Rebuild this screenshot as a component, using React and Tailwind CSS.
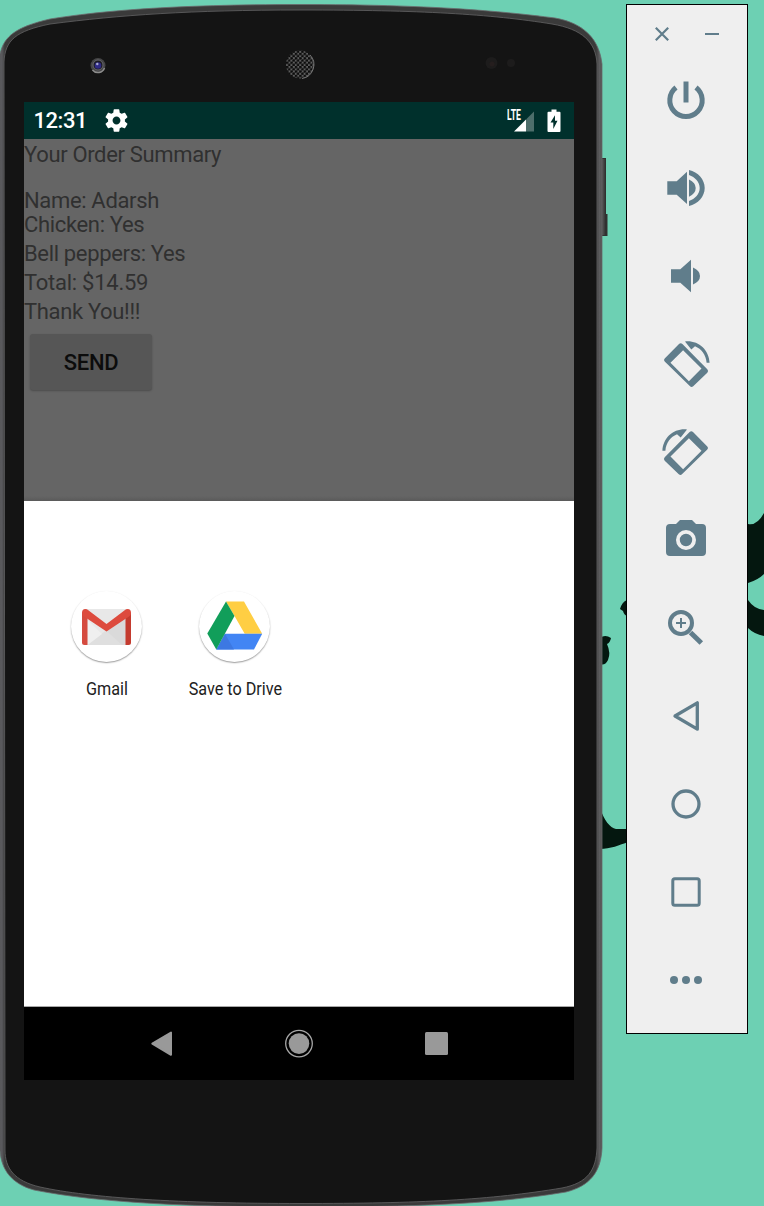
import React from "react";

const PHONE = "M0 54C4 36 16 27 50 19C100 11 170 4.500 301 4.500C430 4.500 500 11 555 18C583 23 597 38 601 58L602 64V1148C601 1172 590 1186 566 1192C500 1203 430 1207 301 1207C170 1207 90 1201 34 1190C12 1184 1 1170 0 1150Z";
const FACE = "M4 62C5 40 16 31 50 24C120 15 190 10 301 10C420 10 490 14 552 24C582 29 596 42 597 64V1148C596 1170 588 1183 562 1188C490 1200 420 1203.500 301 1203.500C180 1203.500 90 1198 40 1187C14 1181 5 1168 5 1150Z";

function Backdrop() {
  return (
    <svg className="absolute inset-0" width="764" height="1206" viewBox="0 0 764 1206">
      <g fill="#04170f">
        <path d="M748 524Q757 526 764 513V574Q758 580 748 583Z" />
        <path d="M748 600Q754 609 764 610V636Q754 634 748 628Z" />
        <path d="M620 609Q622 602 627 600V616Q624 615 623 611Z" />
        <path d="M600 638Q605 634 611 638Q610 643 607 644Q611 653 608 660Q605 666 600 664Z" />
        <path d="M600 808C604 820 610 828 616 829H628V842C620 845 610 849 600 849Z" />
      </g>
    </svg>
  );
}

function PhoneBody() {
  return (
    <svg className="absolute inset-0" width="764" height="1206" viewBox="0 0 764 1206">
      <defs>
        <linearGradient id="rim" x1="0" x2="1" y1="0" y2="0">
          <stop offset="0" stopColor="#4a4a4c" />
          <stop offset="0.003" stopColor="#5c5c60" />
          <stop offset="0.008" stopColor="#3a3a3a" />
          <stop offset="0.99" stopColor="#3a3a3a" />
          <stop offset="0.996" stopColor="#5d5d5f" />
          <stop offset="1" stopColor="#505050" />
        </linearGradient>
        <pattern id="mesh" width="4.4" height="4.4" patternUnits="userSpaceOnUse">
          <rect width="4.4" height="4.4" fill="#5c5c5c" />
          <circle cx="1.1" cy="1.1" r="1.4" fill="#0b0b0b" />
          <circle cx="3.3" cy="3.3" r="1.4" fill="#0b0b0b" />
        </pattern>
      </defs>
      <path d="M600 158H606V214H607.500V236H600Z" fill="#303030" />
      <path d="M602 159H604.500V235H602Z" fill="#484848" />
      <path d={PHONE} fill="url(#rim)" stroke="#6a6a6c" strokeWidth="0.8" />
      <path d={FACE} fill="#141414" stroke="#5c5c5e" strokeWidth="0.9" />
      <circle cx="98" cy="65.500" r="7.500" fill="#454546" />
      <path d="M92.500 70A7 7 0 0 0 104.500 68" fill="none" stroke="#8c8c8c" strokeWidth="1.500" />
      <circle cx="98" cy="65" r="5" fill="#1c1b22" stroke="#6b6b70" strokeWidth="0.900" />
      <circle cx="98" cy="65.500" r="3.300" fill="#2f2a86" />
      <circle cx="97.300" cy="64" r="1.200" fill="#a9a9cf" />
      <circle cx="300" cy="64.500" r="14" fill="url(#mesh)" />
      <path d="M310 55A14 14 0 0 1 302 78.500" fill="none" stroke="#777" strokeWidth="1" />
      <circle cx="491.500" cy="63" r="6" fill="#1d1c1c" />
      <circle cx="492" cy="64" r="2.500" fill="#251e1e" />
      <circle cx="511" cy="63" r="4" fill="#1d1c1c" />
    </svg>
  );
}

function StatusBar() {
  return (
    <div className="flex h-[37px] shrink-0 items-center bg-[#00302c] pl-[9.500px] pr-[13px]">
      <span className="w-[55px] text-[22px] leading-[37px] font-medium tracking-[-0.45px] whitespace-nowrap text-white">12:31</span>
      <svg className="ml-[14.500px]" width="27" height="27" viewBox="0 0 24 24" fill="#fff">
        <path d="M19.430 12.980c.04-.32.07-.64.07-.98s-.03-.66-.07-.98l2.110-1.650c.19-.15.24-.42.12-.64l-2-3.460c-.12-.22-.39-.3-.61-.22l-2.490 1c-.52-.4-1.080-.73-1.690-.98l-.38-2.650C14.460 2.180 14.250 2 14 2h-4c-.25 0-.46.18-.49.42l-.38 2.650c-.61.25-1.170.59-1.690.98l-2.490-1c-.23-.09-.49 0-.61.22l-2 3.460c-.13.22-.07.49.12.64l2.110 1.650c-.04.32-.07.65-.07.98s.03.66.07.98l-2.110 1.650c-.19.15-.24.42-.12.64l2 3.460c.12.22.39.3.61.22l2.490-1c.52.4 1.080.73 1.690.98l.38 2.650c.03.24.24.42.49.42h4c.25 0 .46-.18.49-.42l.38-2.650c.61-.25 1.170-.59 1.690-.98l2.490 1c.23.09.49 0 .61-.22l2-3.460c.12-.22.07-.49-.12-.64l-2.110-1.650zM12 15.500c-1.930 0-3.500-1.570-3.500-3.500s1.570-3.500 3.500-3.500 3.500 1.570 3.500 3.500-1.570 3.500-3.500 3.500z" />
      </svg>
      <span className="ml-auto flex h-[24px] w-[28px] items-start">
        <span className="w-[15px] shrink-0">
          <span className="block w-[26px] origin-left scale-x-[0.62] text-[14px] leading-[12px] font-bold text-white">LTE</span>
        </span>
        <svg className="-ml-[8px] shrink-0" width="21" height="24" viewBox="0 0 21 24">
          <path d="M0 22.500L12 10.500V22.500Z" fill="#fff" />
          <path d="M12 10.500L20 2.500V22.500H12Z" fill="#4d6e6b" />
        </svg>
      </span>
      <svg className="ml-[12px]" width="14" height="24" viewBox="0 0 14 24">
        <path d="M4.500 0.500H9.500V2.800H12.500Q13.500 2.800 13.500 3.800V22Q13.500 23 12.500 23H1.500Q0.500 23 0.500 22V3.800Q0.500 2.800 1.500 2.800H4.500Z" fill="#fff" />
        <path d="M8 6.300L3.500 13.500H6.300V20L10.500 11.800H8Z" fill="#00302c" />
      </svg>
    </div>
  );
}

function OrderSummary() {
  return (
    <div className="flex h-[362px] shrink-0 flex-col bg-[#656565] text-[22px] leading-[29px] tracking-[-0.34px] text-[#303030]">
      <p className="mt-[1px]">Your Order Summary</p>
      <p className="mt-[17px]">Name: Adarsh</p>
      <p className="-mt-[5px]">Chicken: Yes</p>
      <p>Bell peppers: Yes</p>
      <p className="tracking-[-0.26px]">Total: $14.59</p>
      <p>Thank You!!!</p>
      <button className="mt-[8px] ml-[6px] h-[56px] w-[122px] rounded-[3px] bg-[#565656] font-medium text-[#0c0c0c] shadow-[0_1px_2px_rgba(0,0,0,0.25)]">SEND</button>
      <div className="mt-auto h-[5px] bg-linear-to-b from-[#656565] to-[#5a5a5a]" />
    </div>
  );
}

function GmailIcon() {
  return (
    <svg width="72" height="72" viewBox="0 0 72 72" className="shrink-0">
      <path d="M15 18H58Q61 18 61 21V51Q61 54 58 54H15Q12 54 12 51V21Q12 18 15 18Z" fill="#e8e8e8" />
      <path d="M17.500 54L36.500 39L55.500 54Z" fill="#dfdfdf" />
      <path d="M17.500 54L32 43L17.500 29Z" fill="#efefef" />
      <path d="M36.500 40L56 27V54H52Z" fill="#dadada" />
      <path d="M17.500 27V54H14.500Q12 54 12 51.500V21Z" fill="#d54b3f" />
      <path d="M55.500 27V54H58.500Q61 54 61 51.500V21Z" fill="#c43b2f" />
      <path d="M12 22Q12 18 15.500 18Q17 18 18 19L36.500 33L55 19Q56 18 57.500 18Q61 18 61 22Q61 24 59 25.500L36.500 40.500L14 25.500Q12 24 12 22Z" fill="#dd4b3e" />
    </svg>
  );
}

function DriveIcon() {
  return (
    <svg width="72" height="72" viewBox="0 0 72 72" className="shrink-0">
      <path d="M27 10.500H45L63.200 42.700H45.700L35.500 25Z" fill="#ffce43" />
      <path d="M26 42.700H63.200L55 58.400H17.300Z" fill="#4285f4" />
      <path d="M26 42.700L17.300 58.400L35 58.400Z" fill="#3c78e2" />
      <path d="M27 10.500L35.500 25L17.300 58.400L8.300 42.500Z" fill="#119e5a" />
    </svg>
  );
}

function ShareTarget({ label, children }) {
  return (
    <div className="flex w-[128.500px] flex-col items-center">
      <div className="flex size-[71px] items-center justify-center rounded-full bg-white shadow-[0_1px_1.500px_rgba(0,0,0,0.4)]">{children}</div>
      <span className="mt-[15px] ml-[1px] scale-x-[0.875] text-[18.500px] leading-[24px] whitespace-nowrap text-[#212121]">{label}</span>
    </div>
  );
}

function NavBar() {
  return (
    <div className="flex h-[74px] shrink-0 items-center justify-center border-t border-[#a8a8a8] bg-black">
      <div className="flex w-[137.500px] justify-center">
        <svg width="24" height="28" viewBox="0 0 24 28"><path d="M2.300 13.700L21 2.600V24.800Z" fill="#999" stroke="#999" strokeWidth="2" strokeLinejoin="round" /></svg>
      </div>
      <div className="flex w-[137.500px] justify-center">
        <svg width="30" height="30" viewBox="0 0 30 30"><circle cx="15" cy="14.600" r="13.300" fill="none" stroke="#a6a6a6" strokeWidth="1.300" /><circle cx="15" cy="14.600" r="10.300" fill="#999" /></svg>
      </div>
      <div className="flex w-[137.500px] justify-center">
        <div className="size-[23px] rounded-[1.500px] bg-[#999]" />
      </div>
    </div>
  );
}

function RotateGlyph() {
  return (
    <>
      <path fillRule="evenodd" d="M2.700 18.500L17 4Q18.700 2.400 20.400 4L45.300 29.200Q46.900 31 45.300 32.700L31.200 46.200Q29.500 47.700 27.800 46L2.700 21.500Q1.200 20 2.700 18.500ZM8.500 22.800L26.900 41.200L39.500 28.600L21.100 10.200Z" />
      <path d="M23 1.400C36 0 47 9.500 47.600 22.700H44.600C44 15 39.500 9 33 6.300L29.300 9.500Z" />
    </>
  );
}

const TOOLS = [
  { name: "Power", art: <g fill="none" stroke="#607d8b" strokeWidth="5"><path d="M14 11.500A16.200 16.200 0 1 0 34 11.500" /><path d="M24 5.500V26.500" /></g> },
  { name: "Volume up", art: <path d="M5.300 17.300H14.700L25 7.700V40L14.700 30.700H5.300ZM27 15.500Q33.700 18.500 33.700 24T27 32.700ZM27 6C36 8 42.700 15.500 42.700 24S36 40 27 42V37C33 35 37.700 30 37.700 24S33 13 27 11Z" /> },
  { name: "Volume down", art: <path d="M9 17.300H18.300L29 7.800V40.200L18.300 30.700H9ZM31 15.500Q38 18.500 38 24T31 32.500Z" /> },
  { name: "Rotate left", art: <RotateGlyph /> },
  { name: "Rotate right", art: <g transform="matrix(-1 0 0 1 48 0)"><RotateGlyph /></g> },
  { name: "Screenshot", art: <path fillRule="evenodd" d="M18 4H30L34 8H40Q44 8 44 12V36Q44 40 40 40H8Q4 40 4 36V12Q4 8 8 8H14ZM24 14A10 10 0 1 0 24 34A10 10 0 1 0 24 14ZM24 17.800A6.200 6.200 0 1 1 24 30.200A6.200 6.200 0 1 1 24 17.800Z" /> },
  { name: "Zoom", art: <g fill="none" stroke="#607d8b"><circle cx="19" cy="19" r="11" strokeWidth="4" /><path d="M14 19H24M19 14V24" strokeWidth="2" /><path d="M28.500 28.500L39.300 39" strokeWidth="5" /></g> },
  { name: "Back", art: <path d="M13 24L35.300 10.800V37.200Z" fill="none" stroke="#607d8b" strokeWidth="3.300" strokeLinejoin="round" /> },
  { name: "Home", art: <circle cx="24" cy="24" r="13" fill="none" stroke="#607d8b" strokeWidth="3.300" /> },
  { name: "Overview", art: <rect x="10.800" y="10.800" width="26.400" height="26.400" rx="2" fill="none" stroke="#607d8b" strokeWidth="3" /> },
  { name: "More", art: <g><circle cx="12" cy="24" r="4" /><circle cx="24" cy="24" r="4" /><circle cx="36" cy="24" r="4" /></g> },
];

function Toolbar() {
  return (
    <aside className="mt-[4px] ml-[24px] h-[1030px] w-[122px] shrink-0 border border-black bg-[#efefef]">
      <div className="flex h-[51px] justify-center gap-[34px] pt-[21px]">
        <svg width="16" height="16" viewBox="0 0 16 16" stroke="#607d8b" strokeWidth="2.200"><path d="M1.800 1.800L14.200 14.200M14.200 1.800L1.800 14.200" /></svg>
        <svg width="16" height="16" viewBox="0 0 16 16"><path d="M1 7H15V9H1Z" fill="#607d8b" /></svg>
      </div>
      {TOOLS.map((tool) => (
        <div key={tool.name} className="flex h-[88px] items-center justify-center pr-[2px]">
          <svg width="48" height="48" viewBox="0 0 48 48" fill="#607d8b">{tool.art}</svg>
        </div>
      ))}
    </aside>
  );
}

export default function App() {
  return (
    <div className="relative h-[1206px] w-[764px] overflow-hidden bg-[#6dd0b3] font-['Roboto',sans-serif]">
      <Backdrop />
      <PhoneBody />
      <div className="relative flex items-start">
        <main className="w-[602px] shrink-0 pt-[102px] pl-[24px]">
          <div className="flex h-[978px] w-[550px] flex-col bg-white">
            <StatusBar />
            <OrderSummary />
            <section className="flex grow items-start pt-[90px] pl-[18px]">
              <ShareTarget label="Gmail"><GmailIcon /></ShareTarget>
              <ShareTarget label="Save to Drive"><DriveIcon /></ShareTarget>
            </section>
            <NavBar />
          </div>
        </main>
        <Toolbar />
      </div>
    </div>
  );
}
